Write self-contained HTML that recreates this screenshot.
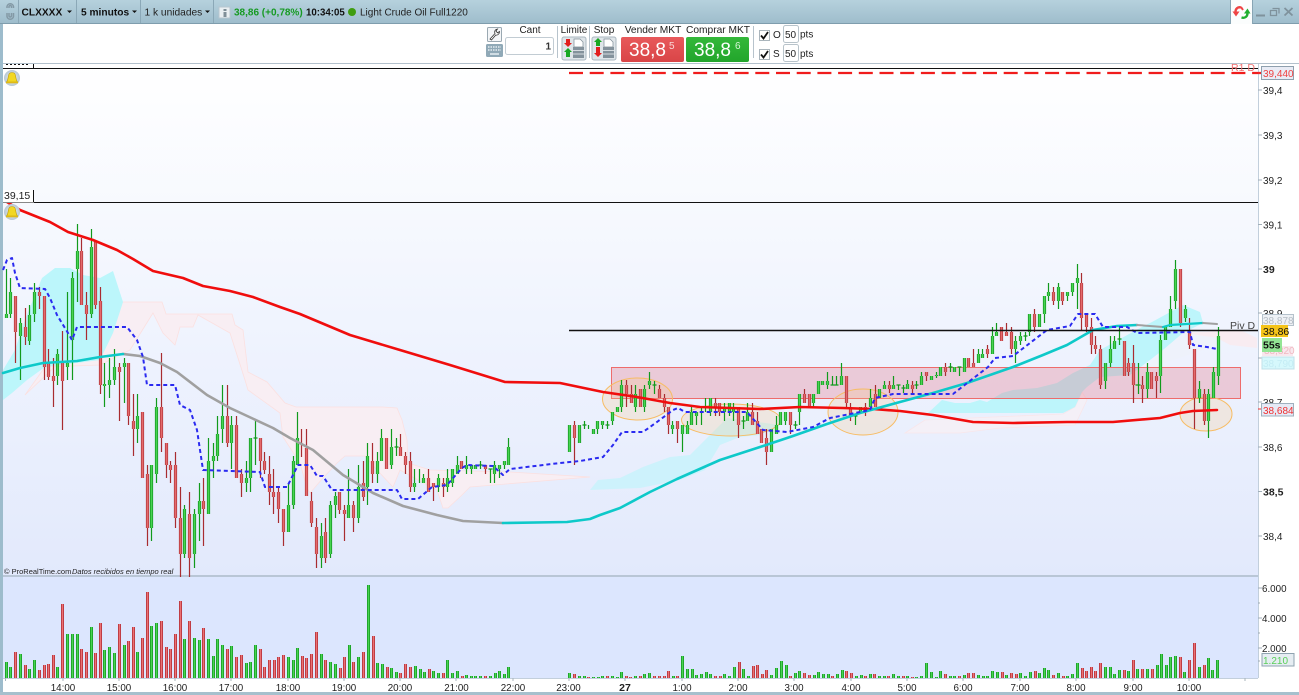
<!DOCTYPE html>
<html><head><meta charset="utf-8"><title>CLXXXX</title>
<style>html,body{margin:0;padding:0;background:#fff;width:1299px;height:695px;overflow:hidden}svg{display:block}text{font-family:"Liberation Sans",sans-serif;fill:#222}</style></head>
<body>
<svg width="1299" height="695" viewBox="0 0 1299 695" xmlns="http://www.w3.org/2000/svg">
<defs>
<linearGradient id="top" x1="0" y1="0" x2="0" y2="1"><stop offset="0" stop-color="#b6d1dd"/><stop offset="1" stop-color="#9fbdcc"/></linearGradient>
<linearGradient id="bg" x1="0" y1="0" x2="0" y2="1"><stop offset="0" stop-color="#ffffff"/><stop offset=".5" stop-color="#f0f4fe"/><stop offset="1" stop-color="#e2e9fc"/></linearGradient>
<linearGradient id="rb" x1="0" y1="0" x2="0" y2="1"><stop offset="0" stop-color="#e8595b"/><stop offset="1" stop-color="#d94547"/></linearGradient>
<linearGradient id="gbn" x1="0" y1="0" x2="0" y2="1"><stop offset="0" stop-color="#34b83a"/><stop offset="1" stop-color="#22a52b"/></linearGradient>
<radialGradient id="bl"><stop offset="0" stop-color="#f4f7fa"/><stop offset="1" stop-color="#b5c6d3"/></radialGradient>
<g id="bell"><circle cx="0" cy="0" r="8" fill="url(#bl)"/><path d="M-5.5 4C-4 2-4 0-3.5-2.5-3-5-1.5-5.5 0-5.5S3-5 3.500-2.500C4 0 4 2 5.500 4Z" fill="#f2d722" stroke="#b89a10" stroke-width=".6"/><rect x="-6" y="3.800" width="12" height="1.500" fill="#e0b915"/></g>
<path id="gb" d="M6 314V318M10 292V314M20 323V336M29 315V341M34 292V314M57 354V376M67 363V367M72 278V340M77 251V269M91 247V314M104 384V386M109 380V385M114 367V380M124 363V367M137 416V429M151 465V528M156 407V474M184 509V554M194 514V554M199 501V514M208 461V514M213 456V461M217 434V456M222 416V429M231 425V443M246 478V483M250 438V478M288 505V532M293 461V505M297 438V465M321 536V558M330 505V554M335 496V505M348 505V518M358 487V518M367 456V487M377 461V474M381 438V461M391 447V465M414 483V487M423 478V483M438 478V487M447 478V487M452 469V483M457 465V474M466 465V469M471 465V469M475 465V469M494 465V474M499 465V469M504 461V465M508 447V465M569 425V452M579 425V443M593 429V434M597 421V429M602 421V425M612 412V421M617 407V412M621 385V407M635 394V407M644 389V407M649 381V385M672 425V429M682 425V434M687 425V434M691 412V425M696 412V416M710 398V412M724 407V412M729 403V412M733 407V412M747 412V421M771 429V452M776 425V434M780 412V425M785 412V421M799 394V412M813 394V403M818 381V394M822 381V385M827 381V385M841 376V385M860 407V412M870 398V407M879 389V398M884 385V389M893 385V389M907 384V389M921 376V385M931 376V380M936 375V376M940 367V376M954 367V372M964 358V372M978 354V363M982 354V358M992 336V354M996 332V336M1015 341V349M1020 336V341M1029 314V332M1039 314V327M1044 296V314M1048 292V296M1058 287V301M1067 292V296M1072 283V292M1077 278V283M1105 363V381M1110 349V363M1114 341V349M1147 372V389M1160 340V376M1165 327V340M1170 309V327M1175 269V301M1185 309V318M1199 389V398M1208 394V421M1213 372V398M1218 336V376"/>
<path id="rbd" d="M15 296V332M25 327V337M39 292V296M44 296V367M48 363V377M53 376V381M62 363V381M81 251V305M86 305V314M95 242V305M100 301V385M119 367V372M128 363V416M133 421V429M142 412V478M147 474V528M161 407V438M166 443V465M170 465V470M175 465V518M180 518V554M189 514V558M203 501V509M227 416V443M236 425V478M241 474V483M260 438V461M264 461V470M269 474V492M273 492V497M278 492V509M283 509V532M306 448V496M311 501V523M316 527V554M325 532V558M339 492V510M344 510V514M353 505V518M363 483V497M372 461V474M386 438V469M400 447V456M405 456V465M410 461V487M428 478V492M433 483V487M443 483V487M461 461V469M485 465V469M574 425V438M626 385V394M631 394V403M640 389V407M659 389V398M664 398V407M668 407V425M677 421V429M715 403V407M719 403V412M738 407V425M752 412V425M757 421V434M761 429V443M766 438V452M790 412V425M804 394V403M809 394V407M846 376V403M850 407V416M865 407V412M875 394V407M889 385V389M912 385V389M926 372V376M945 367V372M968 358V367M973 363V367M987 349V354M1001 327V341M1006 332V336M1011 332V349M1034 314V327M1053 292V301M1062 292V301M1081 283V318M1086 314V327M1091 327V345M1095 345V349M1100 349V385M1124 341V376M1128 363V372M1133 363V385M1142 385V389M1151 372V389M1156 376V381M1180 269V323M1189 332V345M1194 349V398M1204 394V421"/>
<path id="gv" d="M6 678V662M10 678V667M20 678V654M29 678V669M34 678V660M57 678V667M67 678V634M72 678V634M77 678V634M91 678V627M104 678V650M109 678V647M114 678V653M124 678V645M137 678V652M151 678V626M156 678V623M184 678V639M194 678V638M199 678V640M208 678V639M213 678V656M217 678V639M222 678V645M231 678V646M246 678V663M250 678V662M255 678V645M288 678V657M293 678V660M297 678V648M321 678V654M330 678V662M335 678V664M349 678V645M358 678V657M368 678V585M377 678V663M382 678V664M391 678V668M396 678V672M415 678V666M420 678V669M424 678V672M433 678V671M438 678V673M447 678V660M452 678V673M457 678V671M466 678V675M471 678V676M475 678V676M480 678V676M490 678V676M495 678V673M499 678V671M504 678V674M508 678V667M569 678V673M579 678V676M584 678V676M593 678V677M598 678V677M602 678V676M612 678V676M617 678V677M621 678V672M635 678V676M644 678V674M649 678V673M673 678V676M682 678V656M687 678V669M692 678V669M696 678V675M701 678V674M706 678V672M710 678V674M724 678V674M729 678V676M734 678V667M743 678V669M748 678V676M771 678V675M776 678V668M781 678V661M786 678V665M795 678V673M799 678V671M814 678V675M818 678V672M823 678V674M828 678V674M837 678V674M842 678V670M856 678V676M861 678V675M870 678V674M879 678V676M884 678V676M893 678V674M898 678V676M907 678V676M916 678V677M921 678V676M926 678V663M931 678V672M936 678V677M940 678V671M950 678V676M954 678V676M964 678V675M978 678V675M983 678V676M987 678V676M992 678V671M997 678V672M1006 678V675M1020 678V673M1025 678V676M1030 678V672M1039 678V673M1044 678V668M1048 678V670M1058 678V673M1067 678V676M1072 678V674M1077 678V663M1105 678V667M1110 678V667M1114 678V674M1119 678V670M1128 678V671M1137 678V669M1147 678V669M1157 678V665M1161 678V654M1166 678V665M1170 678V657M1175 678V656M1184 678V672M1199 678V667M1208 678V658M1212 678V670M1217 678V660"/>
<path id="rv" d="M15 678V652M25 678V665M39 678V670M44 678V665M48 678V664M53 678V655M62 678V604M81 678V649M86 678V652M95 678V653M100 678V623M119 678V624M128 678V641M133 678V627M142 678V638M147 678V592M161 678V621M166 678V647M170 678V649M175 678V634M180 678V601M189 678V621M203 678V628M227 678V649M236 678V657M241 678V655M260 678V649M264 678V667M269 678V660M274 678V660M278 678V657M283 678V655M302 678V656M306 678V658M311 678V654M316 678V632M325 678V660M340 678V668M344 678V657M353 678V662M363 678V652M373 678V636M387 678V667M400 678V673M405 678V664M410 678V667M429 678V669M443 678V673M462 678V676M485 678V676M574 678V674M588 678V677M607 678V676M626 678V676M630 678V677M640 678V676M654 678V676M659 678V676M664 678V676M668 678V671M677 678V676M715 678V676M720 678V676M739 678V662M753 678V666M757 678V665M762 678V674M766 678V670M790 678V676M804 678V673M809 678V675M832 678V676M846 678V671M851 678V673M865 678V676M874 678V674M888 678V676M903 678V676M912 678V677M945 678V674M959 678V676M968 678V673M973 678V673M1002 678V672M1011 678V673M1016 678V674M1035 678V671M1053 678V675M1063 678V676M1082 678V668M1086 678V671M1091 678V667M1095 678V671M1100 678V663M1124 678V670M1133 678V660M1142 678V669M1152 678V669M1180 678V657M1189 678V660M1194 678V643M1204 678V665"/>
</defs>

<!-- frame -->
<rect width="1299" height="695" fill="#fff"/>
<rect x="3" y="64" width="1255" height="513" fill="url(#bg)"/>
<rect x="3" y="64" width="1255" height="4" fill="#fff"/>
<rect x="3" y="577" width="1255" height="101" fill="#dce6fe"/>
<rect x="3" y="575" width="1255" height="2" fill="#b9c6d6"/>
<rect x="3" y="678" width="1255" height="1" fill="#c3cfdc"/>
<rect x="1258" y="64" width="1" height="614" fill="#c2cfdc"/>
<rect x="0" y="0" width="3" height="695" fill="#9dbccc"/>
<rect x="0" y="692" width="1299" height="3" fill="#a6c0cd"/>
<rect x="3" y="63" width="1296" height="1" fill="#b3c1cc"/>

<!-- clouds -->
<g stroke-width=".8">
<path d="M123 302L162 302 166 314 232 314 235 325 243 330 248 372 267 382 285 403 296 407 383 407 397 408 402 420 407 440 408 463 430 470 510 472 590 477 470 487 462 495 448 508 443 508 437 490 418 480 400 470 393 487 377 470 365 456 345 456 337 463 323 478 310 493 307 488 300 463 283 437 280 413 248 390 245 380 230 333 198 315 193 327 180 327 175 345 163 333 153 313 130 350 100 365 45 367 25 395Z" fill="#f8eef3" stroke="#fbe0e0"/>
<path d="M3 400L3 370 15 350 25 320 33 300 42 278 55 268 70 268 83 275 100 278 113 271 123 302 113 333 100 360 45 367 27 380 12 393Z" fill="#bcf6fb"/>
<path d="M590 490L598 480 620 478 643 467 670 457 690 455 707 438 720 425 727 418 780 425 760 435 740 437 720 445 705 470 680 480 640 488Z" fill="#cdf2fc"/>
<path d="M905 433L925 420 1063 414 1075 407 1082 392 1087 400 1075 425 1000 428 960 433Z" fill="#f4f0f7" stroke="#f8e6ea"/>
<path d="M928 413L942 400 955 403 970 403 980 400 987 402 1002 393 1013 390 1037 388 1057 383 1073 373 1090 365 1100 350 1140 328 1152 322 1183 305 1200 312 1203 323 1183 333 1163 350 1150 360 1130 375 1100 377 1087 387 1082 392 1075 407 1063 413Z" fill="#bdf5fb"/>
<path d="M1183 333L1240 330 1257 338 1257 348 1230 345 1217 338Z" fill="#f8ecf1"/>
<path d="M1183 333L1163 350 1143 373 1130 375 1217 345 1217 338Z" fill="#eef2fb"/>
</g>

<!-- volume -->
<g fill="none" transform="translate(.5 0)">
<use href="#gv" stroke="#169a22" stroke-width="3"/><use href="#gv" stroke="#48d452" stroke-width="1.400"/>
<use href="#rv" stroke="#b53038" stroke-width="3"/><use href="#rv" stroke="#ea7274" stroke-width="1.400"/>
</g>

<!-- box + ellipses -->
<rect x="611.500" y="367.500" width="629" height="31" fill="#e4596c" fill-opacity=".26" stroke="#ee6c6c"/>
<g fill="#f5c88c" fill-opacity=".24" stroke="#f7bc64" stroke-width="1">
<ellipse cx="637.500" cy="399" rx="35" ry="21"/><ellipse cx="731" cy="420" rx="49.500" ry="16"/><ellipse cx="863" cy="412" rx="35" ry="23"/><ellipse cx="1206" cy="414" rx="26" ry="17"/>
</g>

<!-- candles -->
<g fill="none" stroke-width="1.200" transform="translate(.5 0)">
<path stroke="#119a1c" d="M6 269V318M10 278V318M20 318V380M29 305V345M34 283V322M57 349V385M67 292V380M72 272V380M77 224V302M91 229V318M104 363V407M109 358V398M114 349V385M124 358V403M137 394V443M151 465V541M156 398V483M184 505V558M194 509V568M199 483V541M208 438V514M213 443V478M217 416V461M222 385V443M231 416V469M246 461V492M250 438V492M255 421V465M253 438H257M288 483V532M293 456V509M297 412V465M321 523V568M330 501V558M335 492V518M348 469V518M358 465V523M367 443V505M377 452V483M381 429V461M391 429V469M396 438V456M394 447H398M414 469V492M419 469V483M423 474V483M438 474V492M447 469V492M452 469V487M457 456V474M466 456V474M471 465V474M475 465V469M480 461V469M478 465H482M490 469V483M488 469H492M494 461V483M499 465V478M504 461V469M508 438V465M569 425V452M579 425V443M584 421V429M582 425H586M588 425V429M593 429V434M597 421V434M602 421V429M607 421V429M605 425H609M612 412V425M621 380V412M635 385V412M644 385V412M649 372V389M654 381V394M652 385H656M672 421V434M682 425V452M687 421V434M691 407V425M696 412V425M701 407V425M705 398V412M703 407H707M710 398V416M724 403V421M729 403V416M733 403V421M743 416V429M741 421H745M747 403V421M771 429V452M776 416V434M780 412V425M785 412V425M795 421V429M793 425H797M799 394V425M813 394V407M818 381V394M822 381V385M827 372V389M832 376V385M830 385H834M836 376V385M834 385H838M841 363V385M855 416V425M853 416H857M860 407V412M870 389V407M879 389V398M884 381V389M893 376V389M898 385V390M896 385H900M903 385V393M901 388H905M907 380V389M916 381V389M914 385H918M921 372V385M931 376V380M936 372V378M940 367V376M950 363V372M948 367H952M954 367V372M959 367V376M957 367H961M964 358V372M978 349V363M982 349V358M992 327V354M996 323V336M1015 336V363M1020 332V345M1025 332V341M1023 336H1027M1029 314V336M1039 314V327M1044 296V323M1048 283V301M1058 283V309M1067 292V301M1072 283V296M1077 264V309M1105 363V389M1110 336V367M1114 336V349M1119 327V345M1117 339H1121M1138 363V394M1135 385H1140M1147 363V398M1160 335V393M1165 327V340M1170 296V327M1175 260V309M1185 305V322M1199 381V403M1208 389V438M1213 367V398M1218 327V385"/>
<path stroke="#a82c30" d="M15 296V363M25 308V345M39 287V309M44 296V380M48 349V380M53 358V407M62 331V430M81 238V305M86 292V340M95 240V309M100 287V394M119 363V421M128 363V425M133 394V456M142 412V478M147 465V546M161 353V452M166 443V478M170 461V483M175 452V528M180 487V577M189 492V577M203 478V546M227 385V447M236 416V478M241 469V497M260 438V478M264 452V474M269 456V505M273 469V514M278 487V523M283 509V546M301 429V457M306 429V496M311 492V527M316 518V568M325 518V563M339 492V514M344 505V541M353 501V532M363 461V501M372 443V483M386 438V469M400 434V456M405 452V474M410 452V492M428 469V492M433 483V501M443 478V497M461 461V469M485 465V474M574 421V465M626 380V407M631 385V403M640 389V407M659 385V398M664 394V412M668 407V434M677 421V443M715 398V416M719 403V416M738 407V438M752 403V425M757 412V434M761 429V443M766 429V465M790 412V434M804 389V403M809 394V407M846 376V407M850 403V421M865 403V416M875 385V407M889 381V393M912 381V393M926 372V381M945 363V376M968 358V367M973 349V367M987 345V358M1001 327V341M1006 323V336M1011 327V354M1034 309V332M1053 287V305M1062 292V305M1081 273V330M1086 314V332M1091 318V354M1095 336V354M1100 345V389M1124 341V376M1128 358V376M1133 345V403M1142 376V403M1151 372V389M1156 372V398M1180 269V327M1189 318V349M1194 349V429M1204 389V425"/>
<use href="#gb" stroke="#169a22" stroke-width="3.200"/><use href="#gb" stroke="#48d452" stroke-width="1.600"/>
<use href="#rbd" stroke="#b5383c" stroke-width="3.200"/><use href="#rbd" stroke="#e46a6c" stroke-width="1.600"/>
</g>

<!-- lines -->
<g fill="none" stroke-linejoin="round" stroke-linecap="round">
<polyline stroke="#f00d0d" stroke-width="2.600" points="7,202 20,210 50,222 68,232 93,240 117,250 133,259 153,271 183,278 203,286 230,291 253,297 280,307 300,314 350,335 400,350 450,365 505,382 560,383 603,392 637,397 670,403 700,407 760,409 800,407 843,408 873,409 900,411 933,415 973,422 1013,423 1067,422 1113,422 1160,418 1180,413 1193,411 1217,410"/>
<polyline stroke="#a0a0a0" stroke-width="2.600" points="123,354 140,356 160,363 177,372 207,395 230,408 273,428 290,438 313,450 343,475 373,493 403,506 437,515 463,521 503,523"/>
<polyline stroke="#0ec9c9" stroke-width="2.600" points="3,373 20,368 43,363 77,361 100,357 123,354"/>
<polyline stroke="#0ec9c9" stroke-width="2.600" points="503,523 567,522 590,519 600,515 620,508 650,492 677,479 720,460 760,447 793,436 827,424 860,413 900,402 933,393 967,383 1013,367 1043,355 1067,345 1093,330 1117,326 1137,325"/>
<polyline stroke="#a0a0a0" stroke-width="2" points="1137,325 1163,327"/>
<polyline stroke="#0ec9c9" stroke-width="2.200" points="1163,327 1170,325 1203,323"/>
<polyline stroke="#a0a0a0" stroke-width="2" points="1203,323 1217,324"/>
<polyline stroke="#2a2af0" stroke-width="2" stroke-dasharray="4 3" stroke-linecap="butt" points="3,270 7,260 12,258 15,273 20,288 45,289 50,298 57,315 68,333 72,340 77,327 127,327 137,340 143,357 147,385 175,385 180,405 190,410 197,430 203,470 260,472 265,487 287,487 298,465 310,465 317,476 323,476 332,490 397,490 402,499 418,499 432,487 447,485 462,468 467,465 493,466 503,475 510,469 560,463 580,461 603,457 613,445 622,432 643,432 657,422 673,410 678,408 685,412 747,412 763,430 787,432 813,427 830,418 870,410 875,398 893,394 953,394 988,367 995,358 1013,356 1047,330 1070,326 1078,314 1095,314 1103,327 1127,327 1137,333 1190,332 1193,345 1207,347 1217,349"/>
</g>
<path d="M3 68.500H1258M3 202.500H1258" stroke="#111" stroke-width="1" fill="none"/>
<path d="M569 330.500H1258" stroke="#111" stroke-width="1.400" fill="none"/>
<path d="M569 73H1262" stroke="#f01c1c" stroke-width="2.200" stroke-dasharray="14 6.700" fill="none"/>

<!-- left labels -->
<rect x="3" y="190" width="31" height="12.500" fill="#fff"/><path d="M33.500 190V202" stroke="#111"/>
<text x="4" y="199" font-size="10.500">39,15</text>
<path d="M33.500 64V68" stroke="#111"/><path d="M6 64.500H28" stroke="#111" stroke-dasharray="2 2"/>
<use href="#bell" x="12" y="78"/><use href="#bell" x="12" y="212"/>
<text x="4" y="574" font-size="7.500" fill="#333">© ProRealTime.com</text><text x="72" y="574" font-size="7.500" font-style="italic" fill="#333">Datos recibidos en tiempo real</text>
<text x="1231" y="71" font-size="10.500" style="fill:#f27070">R1 D</text>
<text x="1230" y="329" font-size="10.500" style="fill:#444">Piv D</text>

<!-- right axis -->
<path d="M1258 90H1262M1258 135H1262M1258 180H1262M1258 224.500H1262M1258 269H1262M1258 313H1262M1258 358H1262M1258 402H1262M1258 447H1262M1258 491.500H1262M1258 536H1262M1258 588H1262M1258 603H1260M1258 618H1262M1258 633H1260M1258 648H1262M1258 661H1260" stroke="#a0aeb8" fill="none"/>
<g font-size="10">
<text x="1263" y="94">39,4</text><text x="1263" y="139">39,3</text><text x="1263" y="184">39,2</text><text x="1263" y="228.500">39,1</text>
<text x="1263" y="273" font-weight="bold" font-size="10.500">39</text><text x="1263" y="317">38,9</text><text x="1263" y="406">38,7</text><text x="1263" y="451">38,6</text>
<text x="1263" y="495.500" font-weight="bold" font-size="10.500">38,5</text><text x="1263" y="540">38,4</text>
<text x="1262" y="592" font-size="9.800">6.000</text><text x="1262" y="622" font-size="9.800">4.000</text><text x="1262" y="652" font-size="9.800">2.000</text>
</g>
<!-- axis price boxes -->
<rect x="1261.500" y="66.500" width="32" height="13" fill="#e9ecf5" stroke="#8fa0ae"/><text x="1263" y="77" font-size="10" style="fill:#f04040">39,440</text>
<rect x="1262.500" y="314.500" width="31" height="11" fill="#eef1f5" stroke="#b5c2cc"/><text x="1263" y="324" font-size="10" style="fill:#b5bcc4">38,878</text>
<rect x="1262" y="346" width="31" height="10" fill="#f8e8ee"/><text x="1264" y="354" font-size="10" style="fill:#f0b8c0">38,820</text>
<rect x="1262" y="357" width="32" height="12" fill="#d6f8fc" stroke="#c0e0ea"/><text x="1263" y="367" font-size="10" style="fill:#c4ecf4">38,790</text>
<rect x="1261" y="325" width="27" height="12" fill="#f5c41a"/><text x="1263" y="335" font-size="10.500" style="fill:#111">38,86</text>
<rect x="1262" y="338" width="20" height="14" fill="#93e594"/><text x="1263" y="348.500" font-size="10.500" font-weight="bold" style="fill:#111">55s</text>
<rect x="1261.500" y="403.500" width="32" height="12.500" fill="#e6eaf6" stroke="#9fb0be"/><text x="1263" y="414" font-size="10" style="fill:#f03030">38,684</text>
<path d="M1258 409H1261" stroke="#f03030"/><path d="M1258 73H1261" stroke="#f03030"/>
<rect x="1262" y="653.500" width="32" height="12.500" fill="#e6edf2" stroke="#8fa3b0"/><text x="1263" y="664" font-size="10" style="fill:#59cf59">1.210</text>

<!-- time axis -->
<path d="M5.500 678V681M63 678V681M119 678V681M175 678V681M231 678V681M288 678V681M344 678V681M400 678V681M456 678V681M513 678V681M569 678V681M625 678V681M682 678V681M738 678V681M794 678V681M851 678V681M907 678V681M963 678V681M1020 678V681M1076 678V681M1133 678V681M1189 678V681M1245 678V681" stroke="#a8b4bd" fill="none"/>
<g font-size="9.800" text-anchor="middle">
<text x="63" y="691">14:00</text><text x="119" y="691">15:00</text><text x="175" y="691">16:00</text><text x="231" y="691">17:00</text><text x="288" y="691">18:00</text><text x="344" y="691">19:00</text><text x="400" y="691">20:00</text><text x="456.500" y="691">21:00</text><text x="513" y="691">22:00</text><text x="568.500" y="691">23:00</text><text x="625" y="691" font-weight="bold" font-size="10.500">27</text><text x="682" y="691">1:00</text><text x="738" y="691">2:00</text><text x="794" y="691">3:00</text><text x="851" y="691">4:00</text><text x="907" y="691">5:00</text><text x="963" y="691">6:00</text><text x="1020" y="691">7:00</text><text x="1076" y="691">8:00</text><text x="1133" y="691">9:00</text><text x="1189" y="691">10:00</text>
</g>

<!-- top bar -->
<rect x="0" y="0" width="1299" height="23" fill="url(#top)"/>
<rect x="0" y="23" width="1299" height="1" fill="#7f9dad"/>
<rect x="1231" y="0" width="21" height="24" fill="#fbfdfd"/>
<path d="M1230.500 0V24M1252.500 0V24" stroke="#88a5b4" fill="none"/>
<path d="M18.500 0V23M76.500 0V23M140.500 0V23M213.500 0V23" stroke="#8ba8b7" fill="none"/>
<g fill="none" stroke="#8399a5" stroke-width="1.500"><path d="M7 8V6.500A3.300 3.300 0 0 1 13.500 6.500V8M9 8V6.500A1.300 1.300 0 0 1 11.500 6.500V8"/><path d="M7 13V16.500A3.300 3.300 0 0 0 13.500 16.500V13M9 13V16A1.300 1.300 0 0 0 11.500 16V13"/></g>
<text x="21.500" y="15.500" font-size="10.200" font-weight="bold" style="fill:#111">CLXXXX</text>
<path d="M67 10.500H72L69.500 13Z" fill="#111"/>
<text x="81" y="15.500" font-size="10.200" font-weight="bold" style="fill:#111">5 minutos</text>
<path d="M132 10.500H137L134.500 13Z" fill="#111"/>
<text x="144.500" y="15.500" font-size="10.200" style="fill:#222">1 k unidades</text>
<path d="M205 10.500H210L207.500 13Z" fill="#111"/>
<rect x="219" y="7" width="11" height="11" fill="#e9eff2" stroke="#b6c6cf"/><rect x="223.500" y="9" width="3" height="2" fill="#7f8f98"/><rect x="223.500" y="12" width="3" height="5" fill="#7f8f98"/>
<text x="234" y="15.500" font-size="10" font-weight="bold" style="fill:#169a22">38,86 (+0,78%)</text>
<text x="306" y="15.500" font-size="9.700" font-weight="bold" style="fill:#111">10:34:05</text>
<circle cx="352" cy="12" r="4" fill="#3f9d10"/>
<text x="360" y="15.500" font-size="10" style="fill:#222">Light Crude Oil Full1220</text>
<!-- refresh icon -->
<path d="M1241 7.500C1237.500 6.500 1235.500 9 1235.500 12" fill="none" stroke="#ef4444" stroke-width="2.400"/><path d="M1232.500 11.500H1239.500L1236 16.500Z" fill="#ef4444"/><path d="M1241 7L1243 10" stroke="#ef4444" stroke-width="2"/>
<path d="M1241.500 17.500C1245 18.500 1247.500 16.500 1247.500 13" fill="none" stroke="#20b030" stroke-width="2.400"/><path d="M1244 13.500H1250.500L1247.500 8.500Z" fill="#20b030"/>
<!-- window buttons -->
<path d="M1256 15.500H1265" stroke="#7f929c" stroke-width="2"/>
<path d="M1272.500 8.500H1279V13.500M1270.500 10.500H1276.500V15.500H1270.500Z" fill="none" stroke="#7f929c" stroke-width="1.300"/>
<path d="M1284.500 8L1292.500 15.500M1292.500 8L1284.500 15.500" stroke="#7f929c" stroke-width="1.800"/>

<!-- toolbar -->
<path d="M557.500 26V58M589.500 26V58M753.500 26V58" stroke="#b7c3cc" fill="none"/>
<rect x="487.500" y="27.500" width="14" height="14" rx="1" fill="#f4f6f8" stroke="#9ba9b2"/>
<path d="M490 39L495 33.500C494 31.500 495 29.500 497.500 29L496 31.200 497.500 32.800 499.500 31.500C499.500 34 497.500 35.500 495.800 35L491.500 40Z" fill="#fff" stroke="#333" stroke-width=".8"/>
<rect x="486" y="44" width="17" height="13" rx="1.500" fill="#90a9b7"/>
<path d="M488 47H501M488 50H501" stroke="#e6eef2" stroke-dasharray="1.500 1" stroke-width="1.500"/><path d="M490 54H499" stroke="#e6eef2" stroke-width="1.500"/>
<text x="530" y="33" font-size="10" text-anchor="middle">Cant</text>
<rect x="505.500" y="37.500" width="48" height="17" rx="2" fill="#fff" stroke="#c2ccd3"/>
<text x="551" y="49.500" font-size="10" text-anchor="end" font-weight="bold" style="fill:#333">1</text>
<text x="574" y="33" font-size="10" text-anchor="middle">Limite</text>
<text x="604" y="33" font-size="10" text-anchor="middle">Stop</text>
<rect x="562" y="37" width="24" height="23" rx="2" fill="#dfe5e9" stroke="#a9b6bf"/>
<rect x="592" y="37" width="24" height="23" rx="2" fill="#dfe5e9" stroke="#a9b6bf"/>
<path d="M574 39H580L583 42V47H574Z" fill="#fff" stroke="#7c8a94" stroke-width=".7"/>
<path d="M604 39H610L613 42V47H604Z" fill="#fff" stroke="#7c8a94" stroke-width=".7"/>
<rect x="573" y="47" width="11" height="11" fill="#84929c"/><path d="M573 50.500H584M573 54H584" stroke="#d6dce0"/>
<rect x="603" y="47" width="11" height="11" fill="#84929c"/><path d="M603 50.500H614M603 54H614" stroke="#d6dce0"/>
<path d="M566 39H570V43H572L568 47 564 43H566Z" fill="#e21e1e"/><path d="M568 48L572 52H570V57H566V52H564Z" fill="#18a822"/>
<path d="M598 38L602 42H600V46H596V42H594Z" fill="#18a822"/><path d="M596 47H600V53H602L598 57 594 53H596Z" fill="#e21e1e"/>
<text x="653" y="33" font-size="10.200" text-anchor="middle">Vender MKT</text>
<text x="718" y="33" font-size="10.200" text-anchor="middle">Comprar MKT</text>
<rect x="621" y="37" width="63" height="25" rx="2" fill="url(#rb)"/>
<rect x="686" y="37" width="63" height="25" rx="2" fill="url(#gbn)"/>
<text x="629" y="56" font-size="19" style="fill:#fff">38,8</text><text x="669" y="49" font-size="10" style="fill:#f8d8d8">5</text>
<text x="694" y="56" font-size="19" style="fill:#fff">38,8</text><text x="735" y="49" font-size="10" style="fill:#d8f6d8">6</text>
<rect x="759.500" y="30.500" width="10" height="10" fill="#fff" stroke="#aab5bc"/><path d="M761 35.500L763.500 38.500 768 32" fill="none" stroke="#111" stroke-width="1.800"/>
<rect x="759.500" y="49.500" width="10" height="10" fill="#fff" stroke="#aab5bc"/><path d="M761 54.500L763.500 57.500 768 51" fill="none" stroke="#111" stroke-width="1.800"/>
<text x="773" y="38" font-size="10">O</text><text x="773" y="57" font-size="10">S</text>
<rect x="783.500" y="25.500" width="15" height="17" rx="2" fill="#fff" stroke="#b8c3ca"/><rect x="783.500" y="44.500" width="15" height="17" rx="2" fill="#fff" stroke="#b8c3ca"/>
<text x="785" y="38" font-size="10">50</text><text x="785" y="57" font-size="10">50</text>
<text x="800" y="37.500" font-size="10">pts</text><text x="800" y="57" font-size="10">pts</text>
</svg>
</body></html>
